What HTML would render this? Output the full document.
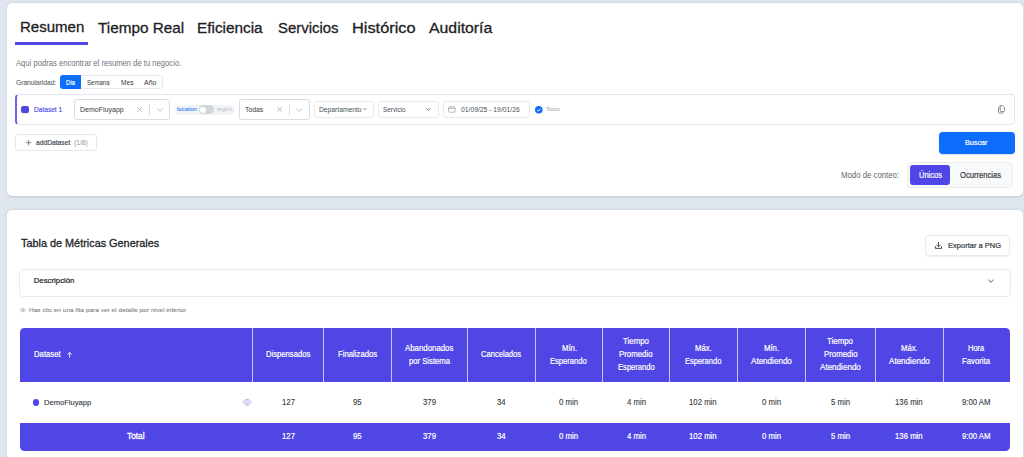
<!DOCTYPE html>
<html><head><meta charset="utf-8">
<style>
*{box-sizing:border-box;margin:0;padding:0}
html,body{width:1024px;height:457px;overflow:hidden;background:#e0e6ee;font-family:"Liberation Sans",sans-serif;color:#212529;position:relative}
.t{position:absolute;white-space:nowrap;transform-origin:0 0}
.s{position:absolute}
.card{position:absolute;background:#fff;border-radius:5px;box-shadow:0 0.6px 2.5px rgba(50,70,100,.2)}
.bx{position:absolute;border:1px solid #e3e6ea;background:#fff}
svg{position:absolute;overflow:visible}
</style></head><body>
<div class="card" style="left:6.5px;top:3px;width:1016.5px;height:193px"></div>
<div class="s" style="left:15px;top:42.4px;width:73px;height:2.3px;background:#5046e5"></div>
<!-- granularity group -->
<div class="bx" style="left:60px;top:75px;width:103px;height:14px;border-radius:3px;border-color:#e6e8eb"></div>
<div class="s" style="left:60px;top:75.4px;width:21.2px;height:13.4px;background:#0d6efd;border-radius:3px 0 0 3px"></div>
<!-- dataset row -->
<div class="bx" style="left:15px;top:94px;width:1000px;height:31px;border-radius:4px;border-color:#e3e6ea;border-left:2px solid #6b62ef"></div>
<div class="s" style="left:21.2px;top:105.7px;width:7.6px;height:7.5px;background:#4f46e5;border-radius:2.2px;box-shadow:0 0.5px 1px rgba(0,0,0,.2)"></div>
<div class="bx" style="left:74px;top:99px;width:96px;height:21px;border-radius:3px;border-color:#d9dce0"></div>
<svg style="left:137px;top:107.1px" width="5.2" height="5.1" viewBox="0 0 5.2 5.1"><path d="M0.3 0.3L4.9 4.8M4.9 0.3L0.3 4.8" stroke="#aeb3b8" stroke-width="0.9" fill="none"/></svg>
<div class="s" style="left:149px;top:104.3px;width:1px;height:10.3px;background:#d9dce0"></div>
<svg style="left:156.6px;top:108px" width="6.3" height="3.5" viewBox="0 0 6.3 3.5"><path d="M0.3 0.3L3.15 3.2L6 0.3" stroke="#b9bdc2" stroke-width="0.9" fill="none"/></svg>
<!-- location toggle -->
<div class="s" style="left:175px;top:104.5px;width:59.4px;height:10.5px;background:#f1f3f5;border-radius:4px"></div>
<div class="s" style="left:199.2px;top:105.4px;width:14.8px;height:8.4px;background:#d2d6dc;border-radius:4.2px"></div>
<div class="s" style="left:200px;top:106.6px;width:6px;height:6px;background:#fff;border-radius:50%"></div>
<!-- Todas -->
<div class="bx" style="left:239px;top:99px;width:71px;height:21px;border-radius:3px;border-color:#d9dce0"></div>
<svg style="left:276.8px;top:107.2px" width="5.3" height="4.8" viewBox="0 0 5.3 4.8"><path d="M0.3 0.3L5 4.5M5 0.3L0.3 4.5" stroke="#aeb3b8" stroke-width="0.9" fill="none"/></svg>
<div class="s" style="left:289px;top:104.2px;width:1px;height:10.6px;background:#d9dce0"></div>
<svg style="left:296.2px;top:108px" width="6.6" height="3.8" viewBox="0 0 6.6 3.8"><path d="M0.3 0.3L3.3 3.5L6.3 0.3" stroke="#b9bdc2" stroke-width="0.9" fill="none"/></svg>
<!-- Departamento / Servicio / date -->
<div class="bx" style="left:314px;top:101px;width:60px;height:17px;border-radius:3px;border-color:#e8ebee"></div>
<svg style="left:362.6px;top:108.4px" width="4.1" height="2" viewBox="0 0 4.1 2"><path d="M0.2 0.2L2.05 1.8L3.9 0.2" stroke="#6c757d" stroke-width="0.7" fill="none"/></svg>
<div class="bx" style="left:378px;top:101px;width:61px;height:17px;border-radius:3px;border-color:#e8ebee"></div>
<svg style="left:426.2px;top:108.2px" width="4.8" height="2.8" viewBox="0 0 4.8 2.8"><path d="M0.3 0.3L2.4 2.4L4.5 0.3" stroke="#6c757d" stroke-width="0.9" fill="none"/></svg>
<div class="bx" style="left:443px;top:101px;width:87px;height:17px;border-radius:3px;border-color:#e8ebee"></div>
<svg style="left:448.3px;top:106.4px" width="7.6" height="6.6" viewBox="0 0 7.6 6.6"><rect x="0.5" y="1" width="6.6" height="5.2" rx="1" stroke="#b3b9bf" stroke-width="1" fill="none"/><path d="M0.5 2.6H7.1M2 0V1.6M5.6 0V1.6" stroke="#b3b9bf" stroke-width="0.9"/></svg>
<svg style="left:534.6px;top:105.6px" width="7.6" height="7.6" viewBox="0 0 7.6 7.6"><circle cx="3.8" cy="3.8" r="3.8" fill="#0d6efd"/><path d="M2 3.9L3.3 5.1L5.6 2.6" stroke="#fff" stroke-width="0.9" fill="none"/></svg>
<!-- copy icon -->
<svg style="left:998px;top:105.2px" width="7" height="8.5" viewBox="0 0 7 8.5"><path d="M2.2 1.9H1.2Q0.5 1.9 0.5 2.6V7.3Q0.5 8 1.2 8H4.4Q5.1 8 5.1 7.3V6.5" stroke="#7d848b" stroke-width="0.9" fill="none"/><path d="M2.2 0.5H4.6L6.5 2.4V5.8Q6.5 6.5 5.8 6.5H2.9Q2.2 6.5 2.2 5.8Z" stroke="#7d848b" stroke-width="0.9" fill="none"/></svg>
<!-- addDataset -->
<div class="bx" style="left:15px;top:134px;width:82px;height:17px;border-radius:3px;border-color:#e6e8eb"></div>
<svg style="left:25.6px;top:140.1px" width="5.3" height="5.3" viewBox="0 0 5.3 5.3"><path d="M2.65 0V5.3M0 2.65H5.3" stroke="#6c757d" stroke-width="0.9"/></svg>
<!-- Buscar -->
<div class="s" style="left:938.7px;top:131.7px;width:76.1px;height:22px;background:#0d6efd;border-radius:4px;box-shadow:0 0.6px 1.2px rgba(0,0,0,.15)"></div>
<!-- Modo de conteo group -->
<div class="bx" style="left:907px;top:162px;width:106px;height:26px;border-radius:4px;background:#f8f9fa;border-color:#eaecef"></div>
<div class="s" style="left:910px;top:165.2px;width:40.1px;height:19.5px;background:#4f46e5;border-radius:3px"></div>

<!-- card 2 -->
<div class="card" style="left:6.5px;top:209.8px;width:1016.5px;height:270px"></div>
<div class="bx" style="left:925px;top:235px;width:85px;height:21px;border-radius:4px;border-color:#e8ebee;box-shadow:0 0.6px 1.2px rgba(0,0,0,.07)"></div>
<svg style="left:935.3px;top:242px" width="7" height="7" viewBox="0 0 7 7"><path d="M3.5 0V4.6M1.6 2.8L3.5 4.7L5.4 2.8M0.4 4.2V6.4H6.6V4.2" stroke="#343a40" stroke-width="0.9" fill="none"/></svg>
<div class="bx" style="left:19px;top:269px;width:992px;height:28px;border-radius:4px;border-color:#e9ecef"></div>
<svg style="left:988.2px;top:279.3px" width="6" height="4" viewBox="0 0 6 4"><path d="M0.5 0.6L3 3.2L5.5 0.6" stroke="#8d939a" stroke-width="1.1" fill="none"/></svg>
<svg style="left:19.9px;top:307.6px" width="6" height="4.4" viewBox="0 0 6 4.4"><path d="M0.3 2.2Q3 -1 5.7 2.2Q3 5.4 0.3 2.2Z" stroke="#9aa0a6" stroke-width="0.6" fill="none"/><circle cx="3" cy="2.2" r="1" stroke="#9aa0a6" stroke-width="0.6" fill="none"/></svg>

<!-- table -->
<div class="s" style="left:19.8px;top:327.8px;width:990.2px;height:54.7px;background:#4f46e5;border-radius:4.5px 4.5px 0 0"></div>
<div class="s" style="left:252px;top:327.8px;width:1px;height:54.7px;background:#c8c5f4"></div>
<div class="s" style="left:323px;top:327.8px;width:1px;height:54.7px;background:#c8c5f4"></div>
<div class="s" style="left:391px;top:327.8px;width:1px;height:54.7px;background:#c8c5f4"></div>
<div class="s" style="left:467px;top:327.8px;width:1px;height:54.7px;background:#c8c5f4"></div>
<div class="s" style="left:535px;top:327.8px;width:1px;height:54.7px;background:#c8c5f4"></div>
<div class="s" style="left:602px;top:327.8px;width:1px;height:54.7px;background:#c8c5f4"></div>
<div class="s" style="left:669px;top:327.8px;width:1px;height:54.7px;background:#c8c5f4"></div>
<div class="s" style="left:737px;top:327.8px;width:1px;height:54.7px;background:#c8c5f4"></div>
<div class="s" style="left:805px;top:327.8px;width:1px;height:54.7px;background:#c8c5f4"></div>
<div class="s" style="left:874.5px;top:327.8px;width:1px;height:54.7px;background:#c8c5f4"></div>
<div class="s" style="left:943px;top:327.8px;width:1px;height:54.7px;background:#c8c5f4"></div>
<svg style="left:67.3px;top:352px" width="5.2" height="5.5" viewBox="0 0 5.2 5.5"><path d="M2.6 0.4V5.5M0.4 2.5L2.6 0.4L4.8 2.5" stroke="#fff" stroke-width="0.9" fill="none"/></svg>
<div class="s" style="left:32.6px;top:399px;width:6.8px;height:6.8px;background:#4f46e5;border-radius:50%"></div>
<svg style="left:243.1px;top:399.1px" width="8.4" height="6.6" viewBox="0 0 8.4 6.6"><path d="M0.4 3.3C2 -0.6 6.4 -0.6 8 3.3C6.4 7.2 2 7.2 0.4 3.3Z" stroke="#9d98f0" stroke-width="0.8" fill="none"/><circle cx="4.2" cy="3.3" r="1.4" stroke="#9d98f0" stroke-width="0.8" fill="none"/></svg>
<div class="s" style="left:19.8px;top:422.5px;width:990.2px;height:28.3px;background:#4f46e5;border-radius:0 0 4.5px 4.5px"></div>

<div class="t" style="left:19.58px;top:19px;font-size:15.5px;line-height:15.5px;font-weight:normal;color:#1d2125;transform:scaleX(0.9690);-webkit-text-stroke:0.3px #1d2125;">Resumen</div>
<div class="t" style="left:97.95px;top:20px;font-size:15.5px;line-height:15.5px;font-weight:normal;color:#1d2125;transform:scaleX(0.9880);-webkit-text-stroke:0.3px #1d2125;">Tiempo Real</div>
<div class="t" style="left:197.16px;top:20px;font-size:15.5px;line-height:15.5px;font-weight:normal;color:#1d2125;transform:scaleX(0.9891);-webkit-text-stroke:0.3px #1d2125;">Eficiencia</div>
<div class="t" style="left:277.54px;top:20px;font-size:15.5px;line-height:15.5px;font-weight:normal;color:#1d2125;transform:scaleX(0.9633);-webkit-text-stroke:0.3px #1d2125;">Servicios</div>
<div class="t" style="left:351.80px;top:20px;font-size:15.5px;line-height:15.5px;font-weight:normal;color:#1d2125;transform:scaleX(1.0548);-webkit-text-stroke:0.3px #1d2125;">Histórico</div>
<div class="t" style="left:428.95px;top:20px;font-size:15.5px;line-height:15.5px;font-weight:normal;color:#1d2125;transform:scaleX(1.0204);-webkit-text-stroke:0.3px #1d2125;">Auditoría</div>
<div class="t" style="left:15.50px;top:60px;font-size:8.2px;line-height:8.2px;font-weight:normal;color:#6c757d;transform:scaleX(0.9334);">Aqui podras encontrar el resumen de tu negocio.</div>
<div class="t" style="left:15.54px;top:79px;font-size:7.6px;line-height:7.6px;font-weight:normal;color:#5c636a;transform:scaleX(0.8750);-webkit-text-stroke:0.1px #5c636a;">Granularidad:</div>
<div class="t" style="left:65.98px;top:79px;font-size:7.4px;line-height:7.4px;font-weight:normal;color:#ffffff;transform:scaleX(0.7784);-webkit-text-stroke:0.2px #ffffff;">Día</div>
<div class="t" style="left:86.80px;top:79px;font-size:7.4px;line-height:7.4px;font-weight:normal;color:#343a40;transform:scaleX(0.8199);">Semana</div>
<div class="t" style="left:121.00px;top:79px;font-size:7.4px;line-height:7.4px;font-weight:normal;color:#343a40;transform:scaleX(0.8972);">Mes</div>
<div class="t" style="left:144.30px;top:79px;font-size:7.4px;line-height:7.4px;font-weight:normal;color:#343a40;transform:scaleX(0.9433);">Año</div>
<div class="t" style="left:34.29px;top:106px;font-size:7.4px;line-height:7.4px;font-weight:normal;color:#5a51e6;transform:scaleX(0.8889);-webkit-text-stroke:0.2px #5a51e6;">Dataset 1</div>
<div class="t" style="left:80.40px;top:106px;font-size:7.4px;line-height:7.4px;font-weight:normal;color:#343a40;transform:scaleX(0.9500);">DemoFluyapp</div>
<div class="t" style="left:177.06px;top:107px;font-size:5.6px;line-height:5.6px;font-weight:normal;color:#3f87f7;transform:scaleX(1.0317);-webkit-text-stroke:0.12px #3f87f7;">location</div>
<div class="t" style="left:216.80px;top:107px;font-size:5.6px;line-height:5.6px;font-weight:normal;color:#b6bcc4;transform:scaleX(0.9910);">region</div>
<div class="t" style="left:245.20px;top:106px;font-size:7.4px;line-height:7.4px;font-weight:normal;color:#343a40;transform:scaleX(0.9238);">Todas</div>
<div class="t" style="left:319.20px;top:106px;font-size:7.0px;line-height:7.0px;font-weight:normal;color:#495057;transform:scaleX(0.9603);">Departamento</div>
<div class="t" style="left:383.40px;top:106px;font-size:7.0px;line-height:7.0px;font-weight:normal;color:#495057;transform:scaleX(0.9079);">Servicio</div>
<div class="t" style="left:460.90px;top:106px;font-size:7.0px;line-height:7.0px;font-weight:normal;color:#495057;transform:scaleX(0.9667);">01/09/25 - 19/01/26</div>
<div class="t" style="left:545.60px;top:107px;font-size:5.0px;line-height:5.0px;font-weight:normal;color:#9aa1a8;transform:scaleX(1.0403);">Todos</div>
<div class="t" style="left:35.60px;top:139px;font-size:7.0px;line-height:7.0px;font-weight:normal;color:#495057;transform:scaleX(0.9568);-webkit-text-stroke:0.2px #495057;">addDataset</div>
<div class="t" style="left:74.00px;top:139px;font-size:7.0px;line-height:7.0px;font-weight:normal;color:#8f969d;transform:scaleX(0.9529);">(1/8)</div>
<div class="t" style="left:965.10px;top:139px;font-size:7.6px;line-height:7.6px;font-weight:normal;color:#ffffff;transform:scaleX(0.9504);-webkit-text-stroke:0.2px #ffffff;">Buscar</div>
<div class="t" style="left:840.80px;top:171px;font-size:8.4px;line-height:8.4px;font-weight:normal;color:#5f666d;transform:scaleX(0.9313);">Modo de conteo:</div>
<div class="t" style="left:919.09px;top:172px;font-size:8.2px;line-height:8.2px;font-weight:normal;color:#ffffff;transform:scaleX(0.9151);-webkit-text-stroke:0.2px #ffffff;">Únicos</div>
<div class="t" style="left:959.79px;top:172px;font-size:8.2px;line-height:8.2px;font-weight:normal;color:#343a40;transform:scaleX(0.9312);-webkit-text-stroke:0.2px #343a40;">Ocurrencias</div>
<div class="t" style="left:20.65px;top:238px;font-size:11.0px;line-height:11.0px;font-weight:normal;color:#212529;transform:scaleX(0.9871);-webkit-text-stroke:0.3px #212529;">Tabla de Métricas Generales</div>
<div class="t" style="left:947.90px;top:242px;font-size:7.6px;line-height:7.6px;font-weight:normal;color:#343a40;transform:scaleX(0.9909);-webkit-text-stroke:0.2px #343a40;">Exportar a PNG</div>
<div class="t" style="left:33.71px;top:277px;font-size:7.8px;line-height:7.8px;font-weight:normal;color:#212529;-webkit-text-stroke:0.22px #212529;">Descripción</div>
<div class="t" style="left:28.75px;top:307px;font-size:6.2px;line-height:6.2px;font-weight:normal;color:#7f868d;transform:scaleX(1.0578);-webkit-text-stroke:0.1px #7f868d;">Haz clic en una fila para ver el detalle por nivel inferior</div>
<div class="t" style="left:266.14px;top:351px;font-size:8.2px;line-height:8.2px;font-weight:normal;color:#ffffff;transform:scaleX(0.9359);-webkit-text-stroke:0.2px #ffffff;">Dispensados</div>
<div class="t" style="left:338.19px;top:351px;font-size:8.2px;line-height:8.2px;font-weight:normal;color:#ffffff;transform:scaleX(0.9465);-webkit-text-stroke:0.2px #ffffff;">Finalizados</div>
<div class="t" style="left:405.35px;top:345px;font-size:8.2px;line-height:8.2px;font-weight:normal;color:#ffffff;transform:scaleX(0.9577);-webkit-text-stroke:0.2px #ffffff;">Abandonados</div>
<div class="t" style="left:408.79px;top:358px;font-size:8.2px;line-height:8.2px;font-weight:normal;color:#ffffff;transform:scaleX(0.9384);-webkit-text-stroke:0.2px #ffffff;">por Sistema</div>
<div class="t" style="left:481.49px;top:351px;font-size:8.2px;line-height:8.2px;font-weight:normal;color:#ffffff;transform:scaleX(0.9274);-webkit-text-stroke:0.2px #ffffff;">Cancelados</div>
<div class="t" style="left:561.59px;top:345px;font-size:8.2px;line-height:8.2px;font-weight:normal;color:#ffffff;transform:scaleX(0.9465);-webkit-text-stroke:0.2px #ffffff;">Mín.</div>
<div class="t" style="left:550.49px;top:358px;font-size:8.2px;line-height:8.2px;font-weight:normal;color:#ffffff;transform:scaleX(0.9243);-webkit-text-stroke:0.2px #ffffff;">Esperando</div>
<div class="t" style="left:623.05px;top:338px;font-size:8.2px;line-height:8.2px;font-weight:normal;color:#ffffff;transform:scaleX(0.9623);-webkit-text-stroke:0.2px #ffffff;">Tiempo</div>
<div class="t" style="left:619.30px;top:351px;font-size:8.2px;line-height:8.2px;font-weight:normal;color:#ffffff;transform:scaleX(0.9555);-webkit-text-stroke:0.2px #ffffff;">Promedio</div>
<div class="t" style="left:617.64px;top:364px;font-size:8.2px;line-height:8.2px;font-weight:normal;color:#ffffff;transform:scaleX(0.9292);-webkit-text-stroke:0.2px #ffffff;">Esperando</div>
<div class="t" style="left:695.24px;top:345px;font-size:8.2px;line-height:8.2px;font-weight:normal;color:#ffffff;transform:scaleX(0.9452);-webkit-text-stroke:0.2px #ffffff;">Máx.</div>
<div class="t" style="left:685.14px;top:358px;font-size:8.2px;line-height:8.2px;font-weight:normal;color:#ffffff;transform:scaleX(0.9168);-webkit-text-stroke:0.2px #ffffff;">Esperando</div>
<div class="t" style="left:764.09px;top:345px;font-size:8.2px;line-height:8.2px;font-weight:normal;color:#ffffff;transform:scaleX(0.9465);-webkit-text-stroke:0.2px #ffffff;">Mín.</div>
<div class="t" style="left:750.85px;top:358px;font-size:8.2px;line-height:8.2px;font-weight:normal;color:#ffffff;transform:scaleX(0.9863);-webkit-text-stroke:0.2px #ffffff;">Atendiendo</div>
<div class="t" style="left:827.30px;top:338px;font-size:8.2px;line-height:8.2px;font-weight:normal;color:#ffffff;transform:scaleX(0.9623);-webkit-text-stroke:0.2px #ffffff;">Tiempo</div>
<div class="t" style="left:823.55px;top:351px;font-size:8.2px;line-height:8.2px;font-weight:normal;color:#ffffff;transform:scaleX(0.9555);-webkit-text-stroke:0.2px #ffffff;">Promedio</div>
<div class="t" style="left:819.85px;top:364px;font-size:8.2px;line-height:8.2px;font-weight:normal;color:#ffffff;transform:scaleX(0.9863);-webkit-text-stroke:0.2px #ffffff;">Atendiendo</div>
<div class="t" style="left:900.99px;top:345px;font-size:8.2px;line-height:8.2px;font-weight:normal;color:#ffffff;transform:scaleX(0.9452);-webkit-text-stroke:0.2px #ffffff;">Máx.</div>
<div class="t" style="left:888.60px;top:358px;font-size:8.2px;line-height:8.2px;font-weight:normal;color:#ffffff;transform:scaleX(0.9863);-webkit-text-stroke:0.2px #ffffff;">Atendiendo</div>
<div class="t" style="left:968.39px;top:345px;font-size:8.2px;line-height:8.2px;font-weight:normal;color:#ffffff;transform:scaleX(0.9188);-webkit-text-stroke:0.2px #ffffff;">Hora</div>
<div class="t" style="left:962.49px;top:358px;font-size:8.2px;line-height:8.2px;font-weight:normal;color:#ffffff;transform:scaleX(0.9496);-webkit-text-stroke:0.2px #ffffff;">Favorita</div>
<div class="t" style="left:33.79px;top:351px;font-size:8.2px;line-height:8.2px;font-weight:normal;color:#ffffff;transform:scaleX(0.9437);-webkit-text-stroke:0.2px #ffffff;">Dataset</div>
<div class="t" style="left:281.55px;top:399px;font-size:8.2px;line-height:8.2px;font-weight:normal;color:#343a40;transform:scaleX(0.9500);-webkit-text-stroke:0.1px #343a40;">127</div>
<div class="t" style="left:281.55px;top:433px;font-size:8.2px;line-height:8.2px;font-weight:normal;color:#ffffff;transform:scaleX(0.9500);-webkit-text-stroke:0.2px #ffffff;">127</div>
<div class="t" style="left:353.21px;top:399px;font-size:8.2px;line-height:8.2px;font-weight:normal;color:#343a40;transform:scaleX(0.9500);-webkit-text-stroke:0.1px #343a40;">95</div>
<div class="t" style="left:353.21px;top:433px;font-size:8.2px;line-height:8.2px;font-weight:normal;color:#ffffff;transform:scaleX(0.9500);-webkit-text-stroke:0.2px #ffffff;">95</div>
<div class="t" style="left:422.80px;top:399px;font-size:8.2px;line-height:8.2px;font-weight:normal;color:#343a40;transform:scaleX(0.9500);-webkit-text-stroke:0.1px #343a40;">379</div>
<div class="t" style="left:422.80px;top:433px;font-size:8.2px;line-height:8.2px;font-weight:normal;color:#ffffff;transform:scaleX(0.9500);-webkit-text-stroke:0.2px #ffffff;">379</div>
<div class="t" style="left:496.96px;top:399px;font-size:8.2px;line-height:8.2px;font-weight:normal;color:#343a40;transform:scaleX(0.9500);-webkit-text-stroke:0.1px #343a40;">34</div>
<div class="t" style="left:496.96px;top:433px;font-size:8.2px;line-height:8.2px;font-weight:normal;color:#ffffff;transform:scaleX(0.9500);-webkit-text-stroke:0.2px #ffffff;">34</div>
<div class="t" style="left:559.28px;top:399px;font-size:8.2px;line-height:8.2px;font-weight:normal;color:#343a40;transform:scaleX(0.9500);-webkit-text-stroke:0.1px #343a40;">0 min</div>
<div class="t" style="left:559.28px;top:433px;font-size:8.2px;line-height:8.2px;font-weight:normal;color:#ffffff;transform:scaleX(0.9500);-webkit-text-stroke:0.2px #ffffff;">0 min</div>
<div class="t" style="left:626.53px;top:399px;font-size:8.2px;line-height:8.2px;font-weight:normal;color:#343a40;transform:scaleX(0.9500);-webkit-text-stroke:0.1px #343a40;">4 min</div>
<div class="t" style="left:626.53px;top:433px;font-size:8.2px;line-height:8.2px;font-weight:normal;color:#ffffff;transform:scaleX(0.9500);-webkit-text-stroke:0.2px #ffffff;">4 min</div>
<div class="t" style="left:689.45px;top:399px;font-size:8.2px;line-height:8.2px;font-weight:normal;color:#343a40;transform:scaleX(0.9500);-webkit-text-stroke:0.1px #343a40;">102 min</div>
<div class="t" style="left:689.45px;top:433px;font-size:8.2px;line-height:8.2px;font-weight:normal;color:#ffffff;transform:scaleX(0.9500);-webkit-text-stroke:0.2px #ffffff;">102 min</div>
<div class="t" style="left:761.78px;top:399px;font-size:8.2px;line-height:8.2px;font-weight:normal;color:#343a40;transform:scaleX(0.9500);-webkit-text-stroke:0.1px #343a40;">0 min</div>
<div class="t" style="left:761.78px;top:433px;font-size:8.2px;line-height:8.2px;font-weight:normal;color:#ffffff;transform:scaleX(0.9500);-webkit-text-stroke:0.2px #ffffff;">0 min</div>
<div class="t" style="left:830.78px;top:399px;font-size:8.2px;line-height:8.2px;font-weight:normal;color:#343a40;transform:scaleX(0.9500);-webkit-text-stroke:0.1px #343a40;">5 min</div>
<div class="t" style="left:830.78px;top:433px;font-size:8.2px;line-height:8.2px;font-weight:normal;color:#ffffff;transform:scaleX(0.9500);-webkit-text-stroke:0.2px #ffffff;">5 min</div>
<div class="t" style="left:895.20px;top:399px;font-size:8.2px;line-height:8.2px;font-weight:normal;color:#343a40;transform:scaleX(0.9500);-webkit-text-stroke:0.1px #343a40;">136 min</div>
<div class="t" style="left:895.20px;top:433px;font-size:8.2px;line-height:8.2px;font-weight:normal;color:#ffffff;transform:scaleX(0.9500);-webkit-text-stroke:0.2px #ffffff;">136 min</div>
<div class="t" style="left:962.18px;top:399px;font-size:8.2px;line-height:8.2px;font-weight:normal;color:#343a40;transform:scaleX(0.9500);-webkit-text-stroke:0.1px #343a40;">9:00 AM</div>
<div class="t" style="left:962.18px;top:433px;font-size:8.2px;line-height:8.2px;font-weight:normal;color:#ffffff;transform:scaleX(0.9500);-webkit-text-stroke:0.2px #ffffff;">9:00 AM</div>
<div class="t" style="left:127.15px;top:433px;font-size:8.2px;line-height:8.2px;font-weight:normal;color:#ffffff;transform:scaleX(1.0127);-webkit-text-stroke:0.3px #ffffff;">Total</div>
<div class="t" style="left:43.86px;top:399px;font-size:8.0px;line-height:8.0px;font-weight:normal;color:#343a40;transform:scaleX(0.9471);-webkit-text-stroke:0.12px #343a40;">DemoFluyapp</div>
</body></html>
